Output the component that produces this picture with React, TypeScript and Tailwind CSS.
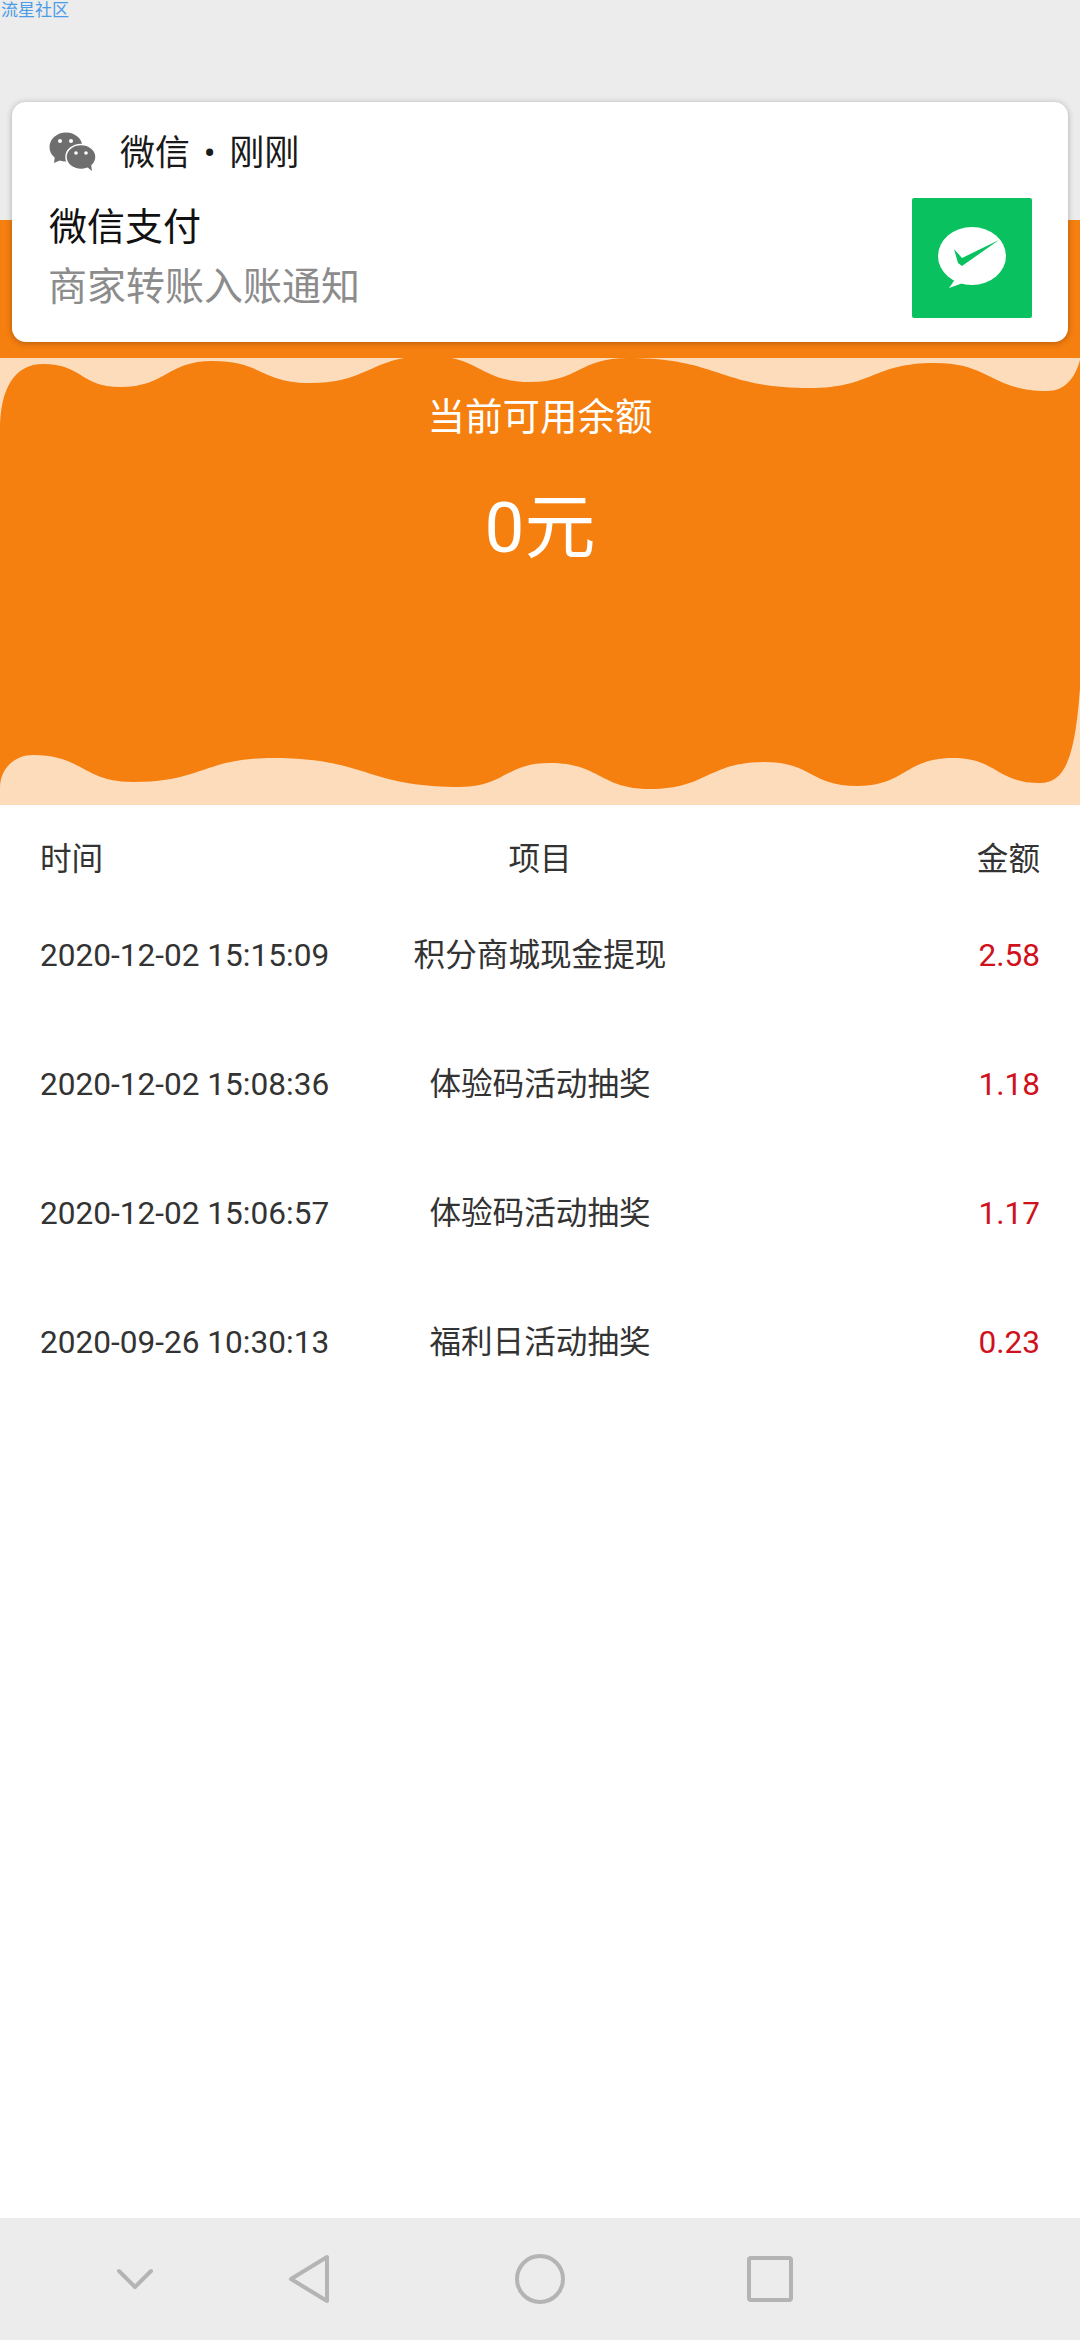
const FONT = "font-['Roboto','Noto_Sans_CJK_SC',sans-serif]"

const records = [
  { time: '2020-12-02 15:15:09', item: '积分商城现金提现', amount: '2.58' },
  { time: '2020-12-02 15:08:36', item: '体验码活动抽奖', amount: '1.18' },
  { time: '2020-12-02 15:06:57', item: '体验码活动抽奖', amount: '1.17' },
  { time: '2020-09-26 10:30:13', item: '福利日活动抽奖', amount: '0.23' },
]

// crests and troughs of the orange blob's two wavy edges
const topWave: [number, number][] = [
  [43, 6], [120, 29], [213, 3], [310, 25], [430, -2], [530, 24], [628, 0], [810, 30], [935, 5], [1047, 33],
]
const bottomWave: [number, number][] = [
  [1040, 425], [953, 400], [857, 428], [765, 404], [650, 431], [550, 405], [460, 429], [273, 400], [133, 424], [33, 397],
]

function wave(points: [number, number][]) {
  let d = ''
  for (let i = 0; i < points.length - 1; i++) {
    const [x1, y1] = points[i]
    const [x2, y2] = points[i + 1]
    const mid = (x1 + x2) / 2
    d += `C${mid} ${y1} ${mid} ${y2} ${x2} ${y2}`
  }
  return d
}

const blobPath =
  'M0 72C0 30 15 6 43 6' +
  wave(topWave) +
  'C1065 33 1075 20 1080 2L1080 330C1075 400 1065 425 1040 425' +
  wave(bottomWave) +
  'C15 397 0 410 0 430Z'

function WechatIcon() {
  return (
    <svg width="48" height="40" viewBox="0 0 48 40" className="shrink-0">
      <ellipse cx="17" cy="15" rx="16.5" ry="14.5" fill="#6e6e6e" />
      <path d="M6 24l-1 7 9-4z" fill="#6e6e6e" />
      <circle cx="11" cy="9" r="2" fill="#fff" />
      <circle cx="22" cy="9" r="2" fill="#fff" />
      <ellipse cx="32" cy="25" rx="15" ry="12.5" fill="#6e6e6e" stroke="#fff" strokeWidth="1.5" />
      <path d="M38 35l5 4-1-7z" fill="#6e6e6e" />
      <circle cx="27" cy="21" r="1.8" fill="#fff" />
      <circle cx="37" cy="21" r="1.8" fill="#fff" />
    </svg>
  )
}

function PayIcon() {
  return (
    <div className="w-[120px] h-[120px] bg-[#0ac160] rounded-[2px] shrink-0">
      <svg width="120" height="120" viewBox="0 0 120 120">
        <ellipse cx="60" cy="58" rx="34" ry="29" fill="#fff" />
        <path d="M44 80l-7 10 14-5z" fill="#fff" />
        <path d="M42 51l8 9 37-18-37 26-4-3z" fill="#0ac160" />
      </svg>
    </div>
  )
}

function Notification() {
  return (
    <div className="absolute left-[12px] right-[12px] top-[102px] h-[240px] bg-white rounded-[14px] shadow-[0_1px_6px_rgba(0,0,0,0.28)] pl-[37px] pr-[36px] pt-[28px]">
      <div className="flex items-center h-[44px]">
        <WechatIcon />
        <span className="ml-[23px] mt-[4px] text-[35px] leading-[44px] text-[#1a1a1a] [word-spacing:5px]">微信 • 刚刚</span>
      </div>
      <div className="flex justify-between items-start mt-[24px]">
        <div>
          <div className="text-[38px] leading-[50px] text-[#111] mt-[4px]">微信支付</div>
          <div className="-ml-[1px] text-[39px] leading-[50px] text-[#8c8c8c] mt-[10px]">商家转账入账通知</div>
        </div>
        <PayIcon />
      </div>
    </div>
  )
}

function NavBar() {
  return (
    <div className="h-[122px] bg-[#ececec] flex items-center shrink-0 pl-[117px]">
      <svg width="36" height="22" viewBox="0 0 36 22" fill="none" stroke="#b4b4b4" strokeWidth="4" strokeLinecap="round" strokeLinejoin="round">
        <path d="M2 3l16 16L34 3" />
      </svg>
      <svg width="42" height="50" viewBox="0 0 42 50" fill="none" stroke="#b4b4b4" strokeWidth="4" strokeLinejoin="round" className="ml-[135px]">
        <path d="M39 3v44L3 25z" />
      </svg>
      <svg width="50" height="50" viewBox="0 0 50 50" fill="none" stroke="#b4b4b4" strokeWidth="4" className="ml-[185px]">
        <circle cx="25" cy="25" r="23" />
      </svg>
      <svg width="46" height="46" viewBox="0 0 46 46" fill="none" stroke="#b4b4b4" strokeWidth="4" strokeLinejoin="round" className="ml-[182px]">
        <rect x="2" y="2" width="42" height="42" rx="2" />
      </svg>
    </div>
  )
}

export default function App() {
  return (
    <div className={`relative w-[1080px] h-[2340px] bg-white flex flex-col overflow-hidden ${FONT}`}>
      {/* status area */}
      <div className="h-[220px] bg-[#ececec] shrink-0">
        <div className="pl-[1px] pt-[1px] text-[17px] leading-[18px] text-[#4a9be8]">流星社区</div>
      </div>
      <div className="h-[138px] bg-[#f57f0f] shrink-0" />

      {/* balance banner */}
      <div className="relative h-[447px] bg-[#fddcbc] shrink-0">
        <svg width="1080" height="447" viewBox="0 0 1080 447" className="absolute inset-0">
          <path d={blobPath} fill="#f57f0f" />
        </svg>
        <div className="relative text-center text-white">
          <div className="pt-[34px] text-[37.5px] leading-[50px]">当前可用余额</div>
          <div className="mt-[41px] text-[71px] leading-[90px]">0元</div>
        </div>
      </div>

      {/* records */}
      <div className="flex-1 px-[40px] text-[#333] text-[31.6px]">
        <div className="grid grid-cols-3 h-[106px] items-center pt-[4px]">
          <span>时间</span>
          <span className="text-center">项目</span>
          <span className="text-right">金额</span>
        </div>
        <div className="-mt-[20px]">
          {records.map((r) => (
            <div key={r.time} className="grid grid-cols-[320px_1fr_320px] h-[129px] items-center">
              <span className="whitespace-nowrap">{r.time}</span>
              <span className="text-center">{r.item}</span>
              <span className="text-right text-[#d0111b]">{r.amount}</span>
            </div>
          ))}
        </div>
      </div>

      <NavBar />
      <Notification />
    </div>
  )
}
